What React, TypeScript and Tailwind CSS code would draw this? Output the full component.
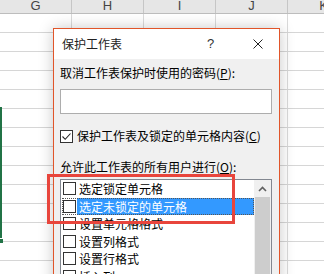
import React from 'react';

const cols = ['G', 'H', 'I', 'J', 'K'];
const rows = Array.from({ length: 14 });

const items = [
  { label: '选定锁定单元格', selected: false },
  { label: '选定未锁定的单元格', selected: true },
  { label: '设置单元格格式', selected: false },
  { label: '设置列格式', selected: false },
  { label: '设置行格式', selected: false },
  { label: '插入列', selected: false },
];

const font = { fontFamily: '"Noto Sans CJK SC", "Noto Sans", sans-serif' };

const App: React.FC = () => {
  return (
    <div className="relative w-[324px] h-[274px] overflow-hidden bg-white" style={font}>
      {/* Sheet headers */}
      <div className="flex h-[14px] bg-[#e6e6e6] border-b border-[#bdbdbd] overflow-hidden">
        {cols.map((c) => (
          <div
            key={c}
            className="w-[72px] shrink-0 border-r border-[#c6c6c6] text-center text-[13px] leading-[11px] text-[#444]"
            style={{ fontFamily: '"Liberation Sans", sans-serif' }}
          >
            {c}
          </div>
        ))}
      </div>

      {/* Grid */}
      <div className="flex flex-col">
        {rows.map((_, i) => (
          <div key={i} className="flex h-[19px] border-b border-[#d6d6d6]">
            {cols.map((c) => (
              <div key={c} className="w-[72px] shrink-0 border-r border-[#dadada]" />
            ))}
          </div>
        ))}
      </div>

      {/* Selection edge */}
      <div className="absolute left-0 top-[107px] w-[2px] h-[131px] bg-[#217346]" />
      <div className="absolute left-0 top-[239px] w-[3px] h-[4px] bg-[#217346]" />

      {/* Dialog */}
      <div className="absolute left-[53px] top-[28px] w-[227px] border border-[#e1552a] bg-[#f0f0f0] shadow-[0_0_14px_rgba(0,0,0,0.22)]">
        <div className="h-[30px] bg-white flex items-center pl-[8px] text-[12px] text-[#222]">
          <span>保护工作表</span>
          <span className="ml-[85px] text-[13px] text-[#333]" style={{ fontFamily: '"Liberation Sans", sans-serif' }}>?</span>
          <svg className="ml-[39px]" width="10" height="10" viewBox="0 0 10 10">
            <path d="M0.5 0.5 L9.5 9.5 M9.5 0.5 L0.5 9.5" stroke="#222" strokeWidth="1" fill="none" />
          </svg>
        </div>

        <div className="flex flex-col pl-[6px] text-[12px] text-black">
          <div className="mt-[6px] h-[16px] leading-[16px]">
            取消工作表保护时使用的密码(<span className="underline">P</span>):
          </div>
          <div className="mt-[8px] w-[212px] h-[25px] bg-white border border-[#adadad]" />

          <div className="mt-[14px] h-[16px] flex items-center">
            <div className="w-[13px] h-[13px] border border-[#333] bg-white flex items-center justify-center">
              <svg width="11" height="11" viewBox="0 0 11 11">
                <path d="M1.5 5.5 L4.2 8.3 L9.5 2.5" stroke="#222" strokeWidth="1.1" fill="none" />
              </svg>
            </div>
            <span className="ml-[4px] leading-[16px]">
              保护工作表及锁定的单元格内容(<span className="underline">C</span>)
            </span>
          </div>

          <div className="mt-[15px] h-[16px] leading-[16px]">
            允许此工作表的所有用户进行(<span className="underline">O</span>):
          </div>

          <div className="mt-[4px] w-[212px] h-[120px] bg-white border border-[#828790] flex overflow-hidden">
            <div className="flex-1 flex flex-col pl-[1px]">
              {items.map((it) => (
                <div
                  key={it.label}
                  className={
                    'h-[17.5px] shrink-0 flex items-center ' +
                    (it.selected ? 'outline outline-1 outline-dotted outline-[#555] -outline-offset-1' : '')
                  }
                >
                  <div className="ml-[1px] w-[13px] h-[13px] border border-[#333] bg-white shrink-0" />
                  <div
                    className={
                      'ml-[1px] pl-[2px] h-full flex-1 leading-[17px] ' +
                      (it.selected ? 'bg-[#3399ff] text-white' : '')
                    }
                  >
                    {it.label}
                  </div>
                </div>
              ))}
            </div>
            <div className="w-[17px] shrink-0 bg-[#f0f0f0] flex flex-col items-center">
              <div className="h-[17px] flex items-center justify-center">
                <svg width="9" height="6" viewBox="0 0 9 6">
                  <path d="M1 5 L4.5 1.5 L8 5" stroke="#606060" strokeWidth="1.6" fill="none" />
                </svg>
              </div>
              <div className="w-[15px] flex-1 bg-[#cdcdcd]" />
            </div>
          </div>
        </div>
      </div>

      {/* Annotation */}
      <div className="absolute left-[47px] top-[174px] w-[188px] h-[50px] border-[3px] border-[#e8453c]" />
    </div>
  );
};

export default App;
